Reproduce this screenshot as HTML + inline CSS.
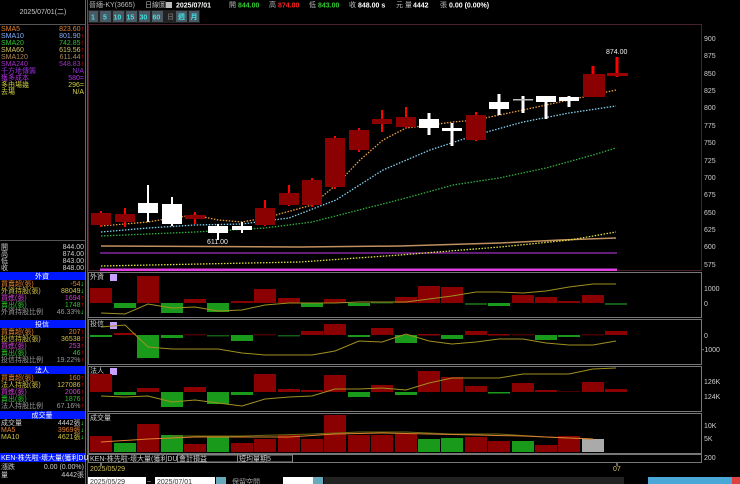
<!DOCTYPE html>
<html><head><meta charset="utf-8"><style>
html,body{margin:0;padding:0;background:#000;width:740px;height:484px;overflow:hidden}
svg{display:block}
text{font-family:"Liberation Sans","Noto Sans CJK TC",sans-serif;font-size:7px}
.m{font-family:"Liberation Mono","Noto Sans CJK TC",monospace}
</style></head><body>
<svg width="740" height="484" viewBox="0 0 740 484" xmlns="http://www.w3.org/2000/svg">
<rect width="740" height="484" fill="#000"/>
<!-- left panel -->
<line x1="85.5" y1="0" x2="85.5" y2="484" stroke="#666"/>
<line x1="87.5" y1="0" x2="87.5" y2="484" stroke="#555"/>
<text x="43" y="14" fill="#ccc" text-anchor="middle" font-size="7">2025/07/01(二)</text>
<line x1="0" y1="24.5" x2="85" y2="24.5" stroke="#555"/>
<g font-size="6.5">
<text x="1" y="31" fill="#e08030">SMA5</text><text x="84" y="31" fill="#e08030" text-anchor="end">823.60<tspan fill="#f00">↑</tspan></text>
<text x="1" y="38" fill="#80b0ff">SMA10</text><text x="84" y="38" fill="#80b0ff" text-anchor="end">801.90<tspan fill="#f00">↑</tspan></text>
<text x="1" y="45" fill="#30c030">SMA20</text><text x="84" y="45" fill="#30c030" text-anchor="end">742.85<tspan fill="#f00">↑</tspan></text>
<text x="1" y="52" fill="#d0c060">SMA60</text><text x="84" y="52" fill="#d0c060" text-anchor="end">619.56<tspan fill="#f00">↑</tspan></text>
<text x="1" y="59" fill="#b08858">SMA120</text><text x="84" y="59" fill="#b08858" text-anchor="end">611.44<tspan fill="#f00">↑</tspan></text>
<text x="1" y="66" fill="#a030c0">SMA240</text><text x="84" y="66" fill="#a030c0" text-anchor="end">548.83<tspan fill="#f00">↑</tspan></text>
<text x="1" y="73" fill="#9030d0">千方地傳籌</text><text x="84" y="73" fill="#9030d0" text-anchor="end">N/A</text>
<text x="1" y="80" fill="#b030e0">獲多成本</text><text x="84" y="80" fill="#b030e0" text-anchor="end">580=</text>
<text x="1" y="87" fill="#d0d040">多由場幾</text><text x="84" y="87" fill="#d0d040" text-anchor="end">296=</text>
<text x="1" y="94" fill="#d0d040">去場</text><text x="84" y="94" fill="#d0d040" text-anchor="end">N/A</text>
</g>
<line x1="0" y1="240.5" x2="85" y2="240.5" stroke="#555"/>
<g font-size="6.5" fill="#ccc">
<text x="1" y="249">開</text><text x="84" y="249" text-anchor="end">844.00</text>
<text x="1" y="256">高</text><text x="84" y="256" text-anchor="end">874.00</text>
<text x="1" y="263">低</text><text x="84" y="263" text-anchor="end">843.00</text>
<text x="1" y="270">收</text><text x="84" y="270" text-anchor="end">848.00</text>
</g>
<g font-size="6.5">
<rect x="0" y="272" width="85" height="8" fill="#0018ff"/><text x="42" y="278.5" fill="#fff" text-anchor="middle">外資</text>
<text x="1" y="286" fill="#e08030">買賣超(張)</text><text x="84" y="286" fill="#e08030" text-anchor="end">-54<tspan fill="#3f3">↓</tspan></text>
<text x="1" y="293" fill="#d0c040">外資持股(張)</text><text x="84" y="293" fill="#d0c040" text-anchor="end">88049<tspan fill="#3f3">↓</tspan></text>
<text x="1" y="300" fill="#d040d0">買進(張)</text><text x="84" y="300" fill="#d040d0" text-anchor="end">1694<tspan fill="#f00">↑</tspan></text>
<text x="1" y="307" fill="#30c030">賣出(張)</text><text x="84" y="307" fill="#30c030" text-anchor="end">1748<tspan fill="#f00">↑</tspan></text>
<text x="1" y="314" fill="#999">外資持股比例</text><text x="84" y="314" fill="#999" text-anchor="end">46.33%<tspan fill="#3f3">↓</tspan></text>
<rect x="0" y="320" width="85" height="8" fill="#0018ff"/><text x="42" y="326.5" fill="#fff" text-anchor="middle">投信</text>
<text x="1" y="334" fill="#e08030">買賣超(張)</text><text x="84" y="334" fill="#e08030" text-anchor="end">207<tspan fill="#f00">↑</tspan></text>
<text x="1" y="341" fill="#d0c040">投信持股(張)</text><text x="84" y="341" fill="#d0c040" text-anchor="end">36538<tspan fill="#f00">↑</tspan></text>
<text x="1" y="348" fill="#d040d0">買進(張)</text><text x="84" y="348" fill="#d040d0" text-anchor="end">253<tspan fill="#f00">↑</tspan></text>
<text x="1" y="355" fill="#30c030">賣出(張)</text><text x="84" y="355" fill="#30c030" text-anchor="end">46<tspan fill="#f00">↑</tspan></text>
<text x="1" y="362" fill="#999">投信持股比例</text><text x="84" y="362" fill="#999" text-anchor="end">19.22%<tspan fill="#f00">↑</tspan></text>
<rect x="0" y="366" width="85" height="8" fill="#0018ff"/><text x="42" y="372.5" fill="#fff" text-anchor="middle">法人</text>
<text x="1" y="380" fill="#e08030">買賣超(張)</text><text x="84" y="380" fill="#e08030" text-anchor="end">160<tspan fill="#f00">↑</tspan></text>
<text x="1" y="387" fill="#d0c040">法人持股(張)</text><text x="84" y="387" fill="#d0c040" text-anchor="end">127086<tspan fill="#f00">↑</tspan></text>
<text x="1" y="394" fill="#d040d0">買進(張)</text><text x="84" y="394" fill="#d040d0" text-anchor="end">2006<tspan fill="#f00">↑</tspan></text>
<text x="1" y="401" fill="#30c030">賣出(張)</text><text x="84" y="401" fill="#30c030" text-anchor="end">1876<tspan fill="#f00">↑</tspan></text>
<text x="1" y="408" fill="#999">法人持股比例</text><text x="84" y="408" fill="#999" text-anchor="end">67.16%<tspan fill="#f00">↑</tspan></text>
<rect x="0" y="411" width="85" height="8" fill="#0018ff"/><text x="42" y="417.5" fill="#fff" text-anchor="middle">成交量</text>
<text x="1" y="425" fill="#ccc">成交量</text><text x="84" y="425" fill="#ccc" text-anchor="end">4442張<tspan fill="#3f3">↓</tspan></text>
<text x="1" y="432" fill="#e08030">MA5</text><text x="84" y="432" fill="#e08030" text-anchor="end">3969張<tspan fill="#3f3">↓</tspan></text>
<text x="1" y="439" fill="#d0c040">MA10</text><text x="84" y="439" fill="#d0c040" text-anchor="end">4621張<tspan fill="#3f3">↓</tspan></text>
<rect x="0" y="453" width="85" height="9" fill="#0018ff"/><text x="1" y="460" fill="#fff" font-size="6">KEN-株先啦-壞大量(獲利DUP)</text>
<text x="1" y="469" fill="#ccc">漲跌</text><text x="84" y="469" fill="#ccc" text-anchor="end">0.00 (0.00%)</text>
<text x="1" y="477" fill="#ccc">量</text><text x="84" y="477" fill="#ccc" text-anchor="end">4442張</text>
</g>

<!-- header -->
<text x="89" y="7" fill="#bbb" font-size="6.5">晉緬-KY(3665)</text>
<text x="145" y="7" fill="#bbb" font-size="6.5">日線圖</text>
<rect x="166" y="2" width="6" height="6" fill="#bbb"/>
<text x="176" y="7.5" fill="#fff" font-size="8.5" font-weight="bold">2025/07/01</text>
<text x="229" y="7" fill="#bbb" font-size="6.5">開</text><text x="238" y="7.5" fill="#3c3" font-size="8.5" font-weight="bold">844.00</text>
<text x="269" y="7" fill="#bbb" font-size="6.5">高</text><text x="278" y="7.5" fill="#f22" font-size="8.5" font-weight="bold">874.00</text>
<text x="309" y="7" fill="#bbb" font-size="6.5">低</text><text x="318" y="7.5" fill="#3c3" font-size="8.5" font-weight="bold">843.00</text>
<text x="349" y="7" fill="#bbb" font-size="6.5">收</text><text x="358" y="7.5" fill="#fff" font-size="8.5" font-weight="bold">848.00 s</text>
<text x="396" y="7" fill="#bbb" font-size="6.5">元</text>
<text x="405" y="7" fill="#bbb" font-size="6.5">量</text><text x="413" y="7.5" fill="#fff" font-size="8.5" font-weight="bold">4442</text>
<text x="440" y="7" fill="#bbb" font-size="6.5">張</text><text x="449" y="7.5" fill="#fff" font-size="8.5" font-weight="bold">0.00 (0.00%)</text>
<!-- tabs -->
<rect x="88" y="10" width="112" height="13" fill="#3a4650"/>
<g font-size="7.5" fill="#40e0e0" font-weight="bold">
<rect x="88.5" y="10.5" width="10" height="12" fill="#4a5864" stroke="#222"/><text x="91" y="19.5">1</text>
<rect x="99.5" y="10.5" width="12" height="12" fill="#4a5864" stroke="#222"/><text x="103" y="19.5">5</text>
<rect x="112.5" y="10.5" width="12" height="12" fill="#4a5864" stroke="#222"/><text x="113.5" y="19.5">10</text>
<rect x="125.5" y="10.5" width="12" height="12" fill="#4a5864" stroke="#222"/><text x="126.5" y="19.5">15</text>
<rect x="138.5" y="10.5" width="12" height="12" fill="#4a5864" stroke="#222"/><text x="139.5" y="19.5">30</text>
<rect x="151.5" y="10.5" width="12" height="12" fill="#4a5864" stroke="#222"/><text x="152.5" y="19.5">60</text>
<rect x="164.5" y="10.5" width="10" height="12" fill="#222" stroke="#222"/><text x="167" y="19" fill="#666" font-size="6">日</text>
<rect x="175.5" y="10.5" width="12" height="12" fill="#4a5864" stroke="#222"/><text x="178" y="19" font-size="6">週</text>
<rect x="188.5" y="10.5" width="11" height="12" fill="#4a5864" stroke="#222"/><text x="190.5" y="19" font-size="6">月</text>
</g>

<!-- main chart frame -->
<rect x="88.5" y="24.5" width="613" height="246" fill="none" stroke="#4a2030"/>
<g font-size="7" fill="#ccc">
<text x="704" y="41">900</text><text x="704" y="58">875</text><text x="704" y="76">850</text><text x="704" y="93">825</text>
<text x="704" y="110">800</text><text x="704" y="128">775</text><text x="704" y="145">750</text><text x="704" y="163">725</text>
<text x="704" y="180">700</text><text x="704" y="197">675</text><text x="704" y="215">650</text><text x="704" y="232">625</text>
<text x="704" y="249">600</text><text x="704" y="267">575</text>
</g>
<!-- MA lines -->
<polyline fill="none" stroke="#a030c0" stroke-width="1.2" points="100,253 617,253"/>
<polyline fill="none" stroke="#c09060" stroke-width="1.5" points="101,246 300,247 400,246 500,243 560,240 616,238"/>
<polyline fill="none" stroke="#e0e040" stroke-width="1.3" stroke-dasharray="1.5,1.5" points="101,266 300,262 400,255 500,247 570,240 616,232"/>
<polyline fill="none" stroke="#30b040" stroke-width="1.3" stroke-dasharray="1.5,1.5" points="101,236 195,232 265,228 312,222 359,210 406,198 453,185 499,178 546,168 593,155 616,148"/>
<polyline fill="none" stroke="#80d0f0" stroke-width="1.3" stroke-dasharray="1.5,1.5" points="101,232 148,228 195,225 242,224 289,218 336,200 383,170 430,150 476,135 523,122 569,113 616,106"/>
<polyline fill="none" stroke="#f0a040" stroke-width="1.3" stroke-dasharray="1.5,1.5" points="101,226 148,222 172,218 195,215 218,220 242,222 265,218 312,205 336,185 360,160 383,140 406,128 430,125 453,122 476,120 499,115 523,110 546,105 569,100 593,95 616,90"/>
<rect x="100" y="268.5" width="517" height="2.5" fill="#e040e0"/>
<!-- candles -->
<g stroke-width="2">
<line x1="101" y1="211" x2="101" y2="227" stroke="#f00"/><rect x="91" y="213" width="20" height="12" fill="#8b0000"/>
<line x1="125" y1="208" x2="125" y2="227" stroke="#f00"/><rect x="115" y="214" width="20" height="8" fill="#8b0000"/>
<line x1="148" y1="185" x2="148" y2="222" stroke="#fff"/><rect x="138" y="203" width="20" height="10" fill="#fff"/>
<line x1="172" y1="197" x2="172" y2="226" stroke="#fff"/><rect x="162" y="204" width="20" height="20" fill="#fff"/>
<line x1="195" y1="212" x2="195" y2="224" stroke="#f00"/><rect x="185" y="215" width="20" height="4" fill="#8b0000"/>
<line x1="218" y1="224" x2="218" y2="240" stroke="#fff"/><rect x="208" y="226" width="20" height="7" fill="#fff"/>
<line x1="242" y1="222" x2="242" y2="233" stroke="#fff"/><rect x="232" y="226" width="20" height="4" fill="#fff"/>
<line x1="265" y1="200" x2="265" y2="226" stroke="#f00"/><rect x="255" y="208" width="20" height="17" fill="#8b0000"/>
<line x1="289" y1="185" x2="289" y2="206" stroke="#f00"/><rect x="279" y="193" width="20" height="12" fill="#8b0000"/>
<line x1="312" y1="178" x2="312" y2="207" stroke="#f00"/><rect x="302" y="180" width="20" height="25" fill="#8b0000"/>
<line x1="335" y1="136" x2="335" y2="189" stroke="#f00"/><rect x="325" y="138" width="20" height="49" fill="#8b0000"/>
<line x1="359" y1="128" x2="359" y2="152" stroke="#f00"/><rect x="349" y="130" width="20" height="20" fill="#8b0000"/>
<line x1="382" y1="110" x2="382" y2="132" stroke="#f00"/><rect x="372" y="119" width="20" height="5" fill="#8b0000"/>
<line x1="406" y1="107" x2="406" y2="128" stroke="#f00"/><rect x="396" y="117" width="20" height="10" fill="#8b0000"/>
<line x1="429" y1="113" x2="429" y2="135" stroke="#fff" stroke-width="3"/><rect x="419" y="119" width="20" height="9" fill="#fff"/>
<line x1="452" y1="123" x2="452" y2="146" stroke="#fff" stroke-width="3"/><rect x="442" y="128" width="20" height="3" fill="#fff"/>
<line x1="476" y1="112" x2="476" y2="141" stroke="#f00"/><rect x="466" y="115" width="20" height="25" fill="#8b0000"/>
<line x1="499" y1="94" x2="499" y2="115" stroke="#fff" stroke-width="3"/><rect x="489" y="102" width="20" height="7" fill="#fff"/>
<line x1="523" y1="96" x2="523" y2="113" stroke="#fff" stroke-width="3"/><rect x="513" y="99" width="20" height="1.5" fill="#bbb"/>
<line x1="546" y1="96" x2="546" y2="119" stroke="#fff" stroke-width="3"/><rect x="536" y="96" width="20" height="6" fill="#fff"/>
<line x1="569" y1="96" x2="569" y2="107" stroke="#fff" stroke-width="3"/><rect x="559" y="97" width="20" height="4" fill="#fff"/>
<line x1="593" y1="66" x2="593" y2="97" stroke="#f00" stroke-width="3"/><rect x="583" y="74" width="22" height="23" fill="#8b0000"/>
<line x1="617" y1="57" x2="617" y2="77" stroke="#f00" stroke-width="3"/><rect x="607" y="73" width="21" height="3" fill="#a00000"/>
</g>
<text x="606" y="54" fill="#eee" font-size="7">874.00</text>
<text x="207" y="244" fill="#eee" font-size="7">611.00</text>

<!-- 外資 -->
<rect x="88.5" y="272.5" width="613" height="45" fill="none" stroke="#777"/>
<text x="90" y="279" fill="#ccc" font-size="6">外資</text><rect x="110" y="274" width="7" height="7" fill="#c8a0ff"/>
<g fill="#8b0000">
<rect x="90" y="288" width="22" height="15"/><rect x="137" y="276" width="22" height="27"/><rect x="184" y="299" width="22" height="4"/>
<rect x="231" y="301" width="22" height="2"/><rect x="254" y="289" width="22" height="14"/><rect x="278" y="298" width="22" height="5"/>
<rect x="324" y="299" width="22" height="4"/><rect x="395" y="297" width="22" height="6"/><rect x="418" y="286" width="22" height="17"/>
<rect x="441" y="287" width="22" height="16"/><rect x="512" y="295" width="22" height="8"/><rect x="535" y="297" width="22" height="6"/>
<rect x="558" y="301" width="22" height="2"/><rect x="582" y="295" width="22" height="8"/>
</g>
<g fill="#1a9a1a">
<rect x="114" y="303" width="22" height="5"/><rect x="161" y="303" width="22" height="10"/><rect x="207" y="303" width="22" height="9"/>
<rect x="301" y="303" width="22" height="4"/><rect x="348" y="303" width="22" height="3"/><rect x="371" y="302" width="22" height="1.5" fill="#155a15"/>
<rect x="465" y="303" width="22" height="2" fill="#155a15"/><rect x="488" y="303" width="22" height="3"/><rect x="605" y="303" width="22" height="2" fill="#155a15"/>
</g>
<polyline fill="none" stroke="#a09020" points="101,313 125,314 148,304 172,308 195,307 218,311 242,310 265,305 289,303 312,303 335,303 359,302 382,302 406,302 429,299 452,296 476,292 499,292 523,293 546,291 569,287 593,284 616,284"/>
<text x="704" y="291" fill="#ccc" font-size="7">1000</text><text x="704" y="306" fill="#ccc" font-size="7">0</text>

<!-- 投信 -->
<rect x="88.5" y="319.5" width="613" height="45" fill="none" stroke="#777"/>
<text x="90" y="326" fill="#ccc" font-size="6">投信</text><rect x="110" y="322" width="7" height="7" fill="#c8a0ff"/>
<g fill="#8b0000">
<rect x="114" y="333" width="22" height="2"/><rect x="184" y="334" width="22" height="1.5" fill="#4a0000"/><rect x="254" y="334" width="22" height="1.5" fill="#4a0000"/>
<rect x="301" y="331" width="22" height="4"/><rect x="324" y="324" width="22" height="11"/><rect x="371" y="328" width="22" height="7"/>
<rect x="418" y="334" width="22" height="1.5"/><rect x="465" y="331" width="22" height="4"/><rect x="488" y="334" width="22" height="1.5"/>
<rect x="512" y="334" width="22" height="1.5" fill="#4a0000"/><rect x="582" y="334" width="22" height="1.5" fill="#4a0000"/><rect x="605" y="331" width="22" height="4"/>
</g>
<g fill="#1a9a1a">
<rect x="90" y="335" width="22" height="2"/><rect x="137" y="335" width="22" height="23"/><rect x="161" y="335" width="22" height="3"/>
<rect x="207" y="335" width="22" height="1.5" fill="#155a15"/><rect x="231" y="335" width="22" height="6"/><rect x="278" y="335" width="22" height="1.5" fill="#155a15"/>
<rect x="348" y="335" width="22" height="2"/><rect x="395" y="335" width="22" height="8"/><rect x="441" y="335" width="22" height="4"/>
<rect x="535" y="335" width="22" height="5"/><rect x="558" y="335" width="22" height="2"/>
</g>
<polyline fill="none" stroke="#a09020" points="101,327 125,325 148,347 172,349 195,349 218,349 242,353 265,355 289,355 312,355 335,351 359,341 382,342 406,334 429,341 452,344 476,342 499,339 523,339 546,343 569,345 593,345 616,341"/>
<text x="704" y="338" fill="#ccc" font-size="7">0</text><text x="702" y="352" fill="#ccc" font-size="7">-1000</text>

<!-- 法人 -->
<rect x="88.5" y="366.5" width="613" height="45" fill="none" stroke="#777"/>
<text x="90" y="373" fill="#ccc" font-size="6">法人</text><rect x="110" y="368" width="7" height="7" fill="#c8a0ff"/>
<g fill="#8b0000">
<rect x="90" y="374" width="22" height="18"/><rect x="137" y="388" width="22" height="4"/><rect x="184" y="387" width="22" height="5"/>
<rect x="254" y="374" width="22" height="18"/><rect x="278" y="389" width="22" height="3"/><rect x="301" y="390" width="22" height="2"/>
<rect x="324" y="375" width="22" height="17"/><rect x="371" y="385" width="22" height="7"/><rect x="418" y="371" width="22" height="21"/>
<rect x="441" y="377" width="22" height="15"/><rect x="465" y="386" width="22" height="6"/><rect x="512" y="383" width="22" height="9"/>
<rect x="535" y="390" width="22" height="2"/><rect x="558" y="391" width="22" height="1" fill="#4a0000"/><rect x="582" y="382" width="22" height="10"/><rect x="605" y="389" width="22" height="3"/>
</g>
<g fill="#1a9a1a">
<rect x="114" y="392" width="22" height="3"/><rect x="161" y="392" width="22" height="15"/><rect x="207" y="392" width="22" height="12"/>
<rect x="231" y="392" width="22" height="3"/><rect x="348" y="392" width="22" height="5"/><rect x="395" y="392" width="22" height="3"/><rect x="488" y="392" width="22" height="1.5"/>
</g>
<polyline fill="none" stroke="#a09020" points="101,396 125,397 148,396 172,402 195,400 218,403 242,406 265,399 289,397 312,396 335,389 359,389 382,388 406,390 429,383 452,378 476,378 499,378 523,374 546,374 569,374 593,369 616,368"/>
<text x="704" y="384" fill="#ccc" font-size="7">126K</text><text x="704" y="399" fill="#ccc" font-size="7">124K</text>

<!-- volume -->
<rect x="88.5" y="413.5" width="613" height="40" fill="none" stroke="#777"/>
<text x="90" y="420" fill="#ccc" font-size="6">成交量</text>
<g fill="#8b0000">
<rect x="90" y="436" width="22" height="16"/><rect x="137" y="424" width="22" height="28"/><rect x="184" y="444" width="22" height="8"/>
<rect x="231" y="443" width="22" height="9"/><rect x="254" y="439" width="22" height="13"/><rect x="278" y="435" width="22" height="17"/>
<rect x="301" y="439" width="22" height="13"/><rect x="324" y="415" width="22" height="37"/><rect x="348" y="435" width="22" height="17"/>
<rect x="371" y="435" width="22" height="17"/><rect x="395" y="434" width="22" height="18"/><rect x="441" y="439" width="22" height="13"/>
<rect x="465" y="437" width="22" height="15"/><rect x="488" y="441" width="22" height="11"/><rect x="535" y="445" width="22" height="7"/><rect x="558" y="436" width="22" height="16"/>
</g>
<g fill="#1a9a1a">
<rect x="114" y="443" width="22" height="9"/><rect x="161" y="435" width="22" height="17"/><rect x="207" y="436" width="22" height="16"/>
<rect x="418" y="439" width="22" height="13"/><rect x="441" y="438" width="22" height="14" fill="#1a9a1a"/><rect x="512" y="441" width="22" height="11"/>
</g>
<rect x="582" y="439" width="22" height="13" fill="#aaa"/>
<polyline fill="none" stroke="#6a6a10" points="172,436 242,436 312,434 359,432 406,432 452,434 499,434 546,437 593,439"/>
<polyline fill="none" stroke="#e08030" points="101,442 148,439 195,437 242,437 289,437 335,434 382,433 429,434 476,435 523,436 569,438 593,439"/>
<text x="704" y="428" fill="#ccc" font-size="7">10K</text><text x="704" y="441" fill="#ccc" font-size="7">5K</text>

<!-- toolbar strip -->
<rect x="88.5" y="454.5" width="613" height="8" fill="#000" stroke="#777"/>
<text x="90" y="461" fill="#ccc" font-size="5.5">KEN-株先啦-壞大量(獲利DUP)</text>
<rect x="177.5" y="455" width="67" height="7" fill="#000" stroke="#888"/><text x="179" y="461" fill="#ccc" font-size="5.5">會計損益</text><text x="240" y="461" fill="#ccc" font-size="5">▾</text>
<rect x="237.5" y="455" width="55" height="7" fill="#000" stroke="#888"/><text x="239" y="461" fill="#ccc" font-size="5.5">短均量期5</text>
<text x="704" y="460" fill="#ccc" font-size="7">200</text>
<text x="90" y="471" fill="#d0c060" font-size="7.5">2025/05/29</text>
<line x1="101" y1="463" x2="101" y2="466" stroke="#ccc"/>
<text x="613" y="471" fill="#d0c060" font-size="7.5">07</text>
<line x1="617" y1="463" x2="617" y2="466" stroke="#ccc"/>
<!-- bottom row -->
<rect x="88" y="477" width="58" height="8" fill="#fff"/><text x="90" y="484" fill="#333" font-size="8">2025/05/29</text>
<text x="147" y="484" fill="#ccc" font-size="7">~</text>
<rect x="155" y="477" width="60" height="8" fill="#fff"/><text x="157" y="484" fill="#333" font-size="8">2025/07/01</text>
<rect x="216" y="477" width="10" height="8" fill="#6ab"/>
<text x="232" y="484" fill="#aaa" font-size="10">保留空間</text>
<rect x="283" y="477" width="30" height="8" fill="#fff"/><rect x="313" y="477" width="10" height="8" fill="#6ab"/>
<rect x="324" y="477" width="300" height="8" fill="#222"/>
<rect x="648" y="477" width="92" height="8" fill="#4aa8d8"/>
<rect x="732" y="477" width="8" height="8" fill="#e04040"/>
</svg>
</body></html>
